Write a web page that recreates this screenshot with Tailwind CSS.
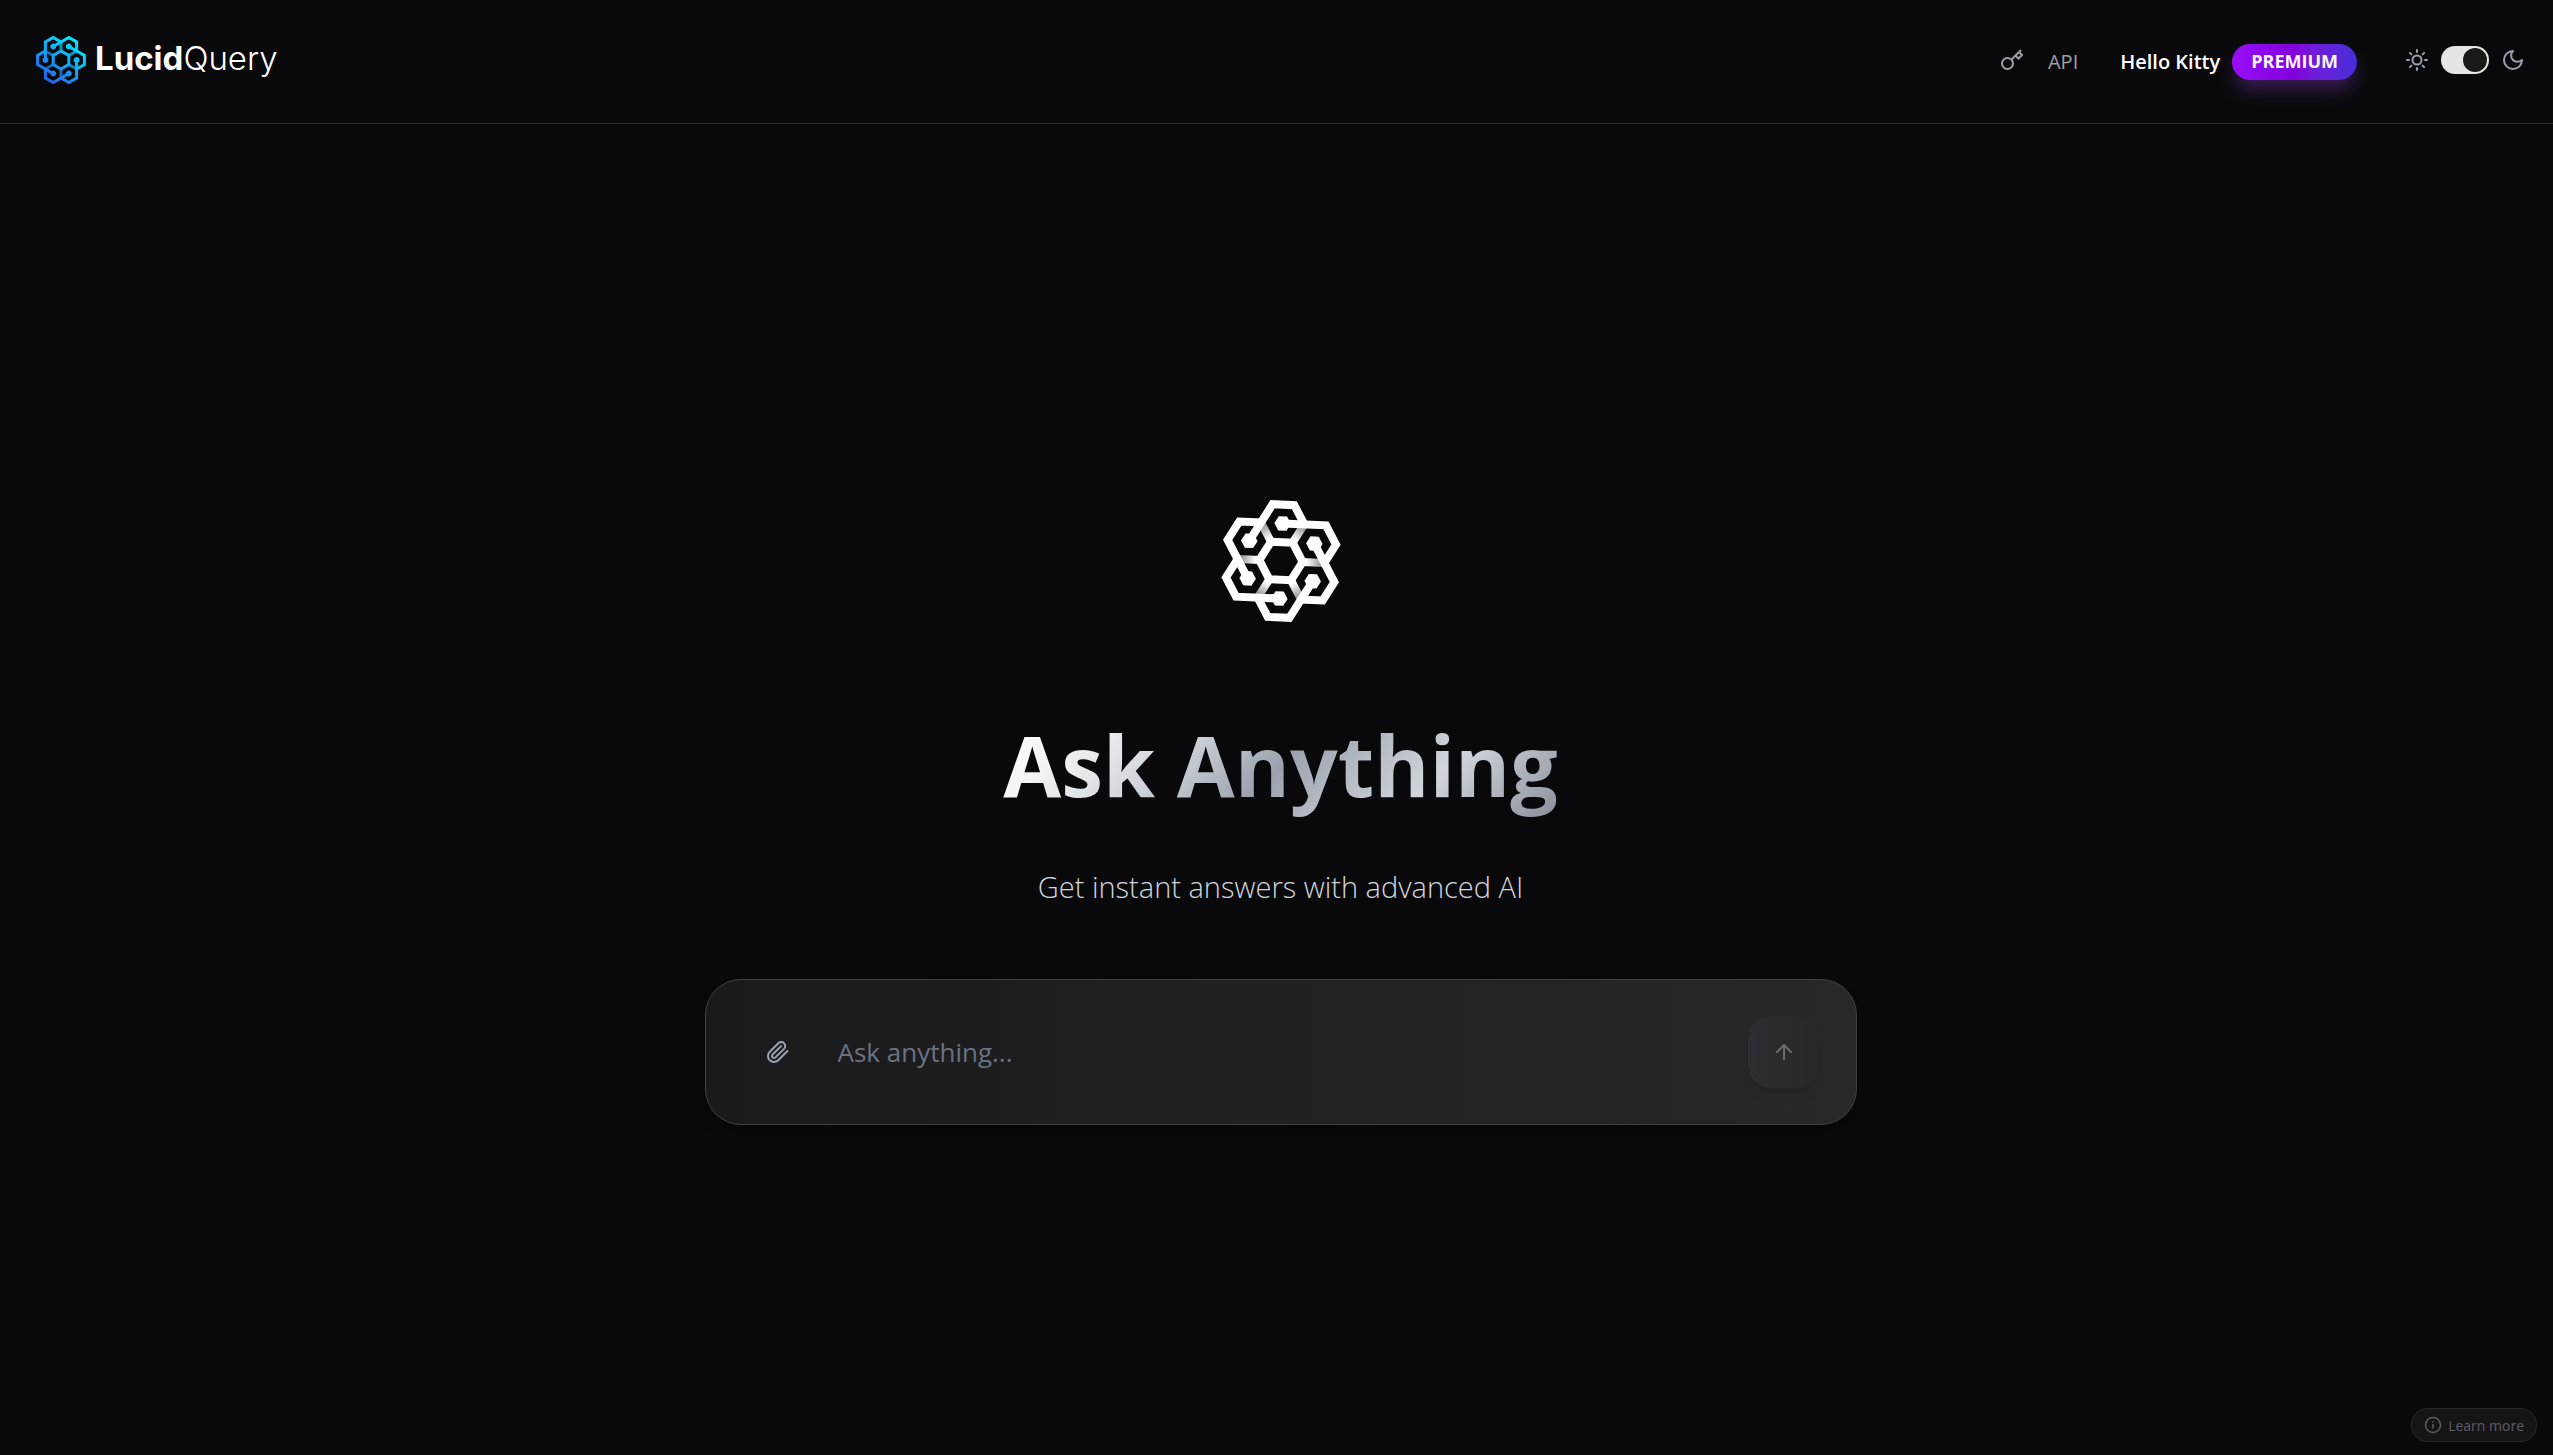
<!DOCTYPE html>
<html lang="en">
<head>
  <meta charset="UTF-8" />
  <meta name="viewport" content="width=device-width, initial-scale=1.0" />
  <title>LucidQuery</title>
  <script src="https://cdn.jsdelivr.net/npm/@tailwindcss/browser@4"></script>
</head>
<body class="bg-zinc-950 min-h-screen flex flex-col text-white font-['Open_Sans','Noto_Sans',sans-serif]">
  <!-- Header -->
  <header class="h-31 px-7 flex items-center justify-between border-b border-[#2b2b2d]">
    <a href="#" class="flex items-center gap-2 pl-[7px] -mt-1" aria-label="LucidQuery home">
      <svg class="w-[52px] h-[52px]" viewBox="-26 -26 52 52" fill="none" aria-hidden="true">
        <defs>
          <linearGradient id="brand" gradientUnits="userSpaceOnUse" x1="14" y1="-20" x2="-14" y2="20">
            <stop offset="0" stop-color="#00e8ff" />
            <stop offset="1" stop-color="#2563eb" />
          </linearGradient>
          <mask id="mark" maskUnits="userSpaceOnUse" x="-26" y="-26" width="52" height="52">
            <g transform="rotate(-30) scale(.09)">
              <g stroke="#fff" stroke-width="34">
                <g id="arm">
                  <path stroke="#bbb" d="M50-86.6 100-173.2" />
                  <path d="M0-173.2H200L250-86.6 196 6.9" />
                  <path stroke="none" fill="#fff" d="M36-173.2 18-142H-18L-36-173.2-18-204.4H18Z" />
                </g>
                <use href="#arm" transform="rotate(60)" />
                <use href="#arm" transform="rotate(120)" />
                <use href="#arm" transform="rotate(180)" />
                <use href="#arm" transform="rotate(240)" />
                <use href="#arm" transform="rotate(300)" />
                <path d="M100 0 50 86.6H-50L-100 0-50-86.6H50Z" />
              </g>
            </g>
          </mask>
        </defs>
        <rect x="-26" y="-26" width="52" height="52" fill="url(#brand)" mask="url(#mark)" />
      </svg>
      <span class="text-[33px] leading-10 pb-1 font-['Inter',sans-serif]"><span class="font-bold">Lucid</span><span class="font-light">Query</span></span>
    </a>

    <nav class="flex items-center">
      <a href="#" class="flex items-center gap-6 text-[20px] font-medium text-zinc-400">
        <svg class="w-6 h-6 -mt-1" viewBox="0 0 24 24" fill="none" stroke="currentColor" stroke-width="2" aria-hidden="true">
          <circle cx="7.5" cy="15.5" r="5.5" />
          <path d="m21 2-9.600 9.600M15.500 7.500l3 3L22 7l-3-3" />
        </svg>
        API
      </a>
      <span class="ml-[42px] text-[20px] font-semibold">Hello Kitty</span>
      <span class="ml-3 h-9 px-[19px] flex items-center rounded-full bg-linear-to-r from-[#9810fa] via-[#8200db] to-[#432dd7] text-[18px] font-bold text-purple-50 shadow-[0_12px_18px_-3px] shadow-purple-500/30">PREMIUM</span>
      <label class="ml-12 -mt-1 flex items-center gap-3 text-gray-400 cursor-pointer">
        <svg class="w-6 h-6" viewBox="0 0 24 24" fill="none" stroke="currentColor" stroke-width="2" stroke-linecap="round" aria-hidden="true">
          <circle cx="12" cy="12" r="4.500" />
          <path d="M12 2v2M12 20v2M2 12h2M20 12h2M4.900 4.900l1.500 1.500M17.600 17.600l1.500 1.500M4.900 19.100l1.500-1.500M17.600 6.400l1.500-1.500" />
        </svg>
        <input type="checkbox" role="switch" checked aria-label="Dark mode" class="peer sr-only" />
        <span class="w-12 h-7 p-0.5 rounded-full bg-stone-200 flex justify-start peer-checked:justify-end">
          <span class="w-6 h-6 rounded-full bg-stone-900"></span>
        </span>
        <svg class="w-6 h-6" viewBox="0 0 24 24" fill="none" stroke="currentColor" stroke-width="2" stroke-linejoin="round" aria-hidden="true">
          <path d="M12 3a6 6 0 0 0 9 9 9 9 0 1 1-9-9Z" />
        </svg>
      </label>
    </nav>
  </header>

  <!-- Hero and question box -->
  <main class="flex-1 pl-2 pt-[375px] flex flex-col items-center">
    <svg class="w-[124px] h-[124px]" viewBox="-62 -62 124 124" fill="none" role="img" aria-label="LucidQuery">
      <defs>
        <linearGradient id="fold" gradientUnits="userSpaceOnUse" x1="58" y1="-100" x2="92" y2="-160">
          <stop offset="0" stop-color="#fff" />
          <stop offset="1" stop-color="#999" />
        </linearGradient>
      </defs>
      <g transform="rotate(2.500) scale(.217)" stroke="#fff" stroke-width="37">
        <g id="limb">
          <path stroke="url(#fold)" d="M50-86.6 100-173.2" />
          <path d="M0-173.2H200L250-86.6 196 6.9" />
          <path stroke="none" fill="#fff" d="M38-173.2 19-140.300H-19L-38-173.2-19-206.100H19Z" />
        </g>
        <use href="#limb" transform="rotate(60)" />
        <use href="#limb" transform="rotate(120)" />
        <use href="#limb" transform="rotate(180)" />
        <use href="#limb" transform="rotate(240)" />
        <use href="#limb" transform="rotate(300)" />
        <path d="M100 0 50 86.6H-50L-100 0-50-86.6H50Z" />
      </g>
    </svg>

    <h1 class="mt-[82px] text-[84px] leading-[120px] font-bold text-transparent bg-clip-text bg-[linear-gradient(135deg,#ffffff_0%,#f3f4f6_15%,#d1d5db_32%,#9ca3af_50%,#d1d5db_75%,#868c98_100%)]">Ask Anything</h1>
    <p class="mt-[42px] text-[29px] leading-10 font-light text-gray-300">Get instant answers with advanced AI</p>

    <form class="mt-18 w-full max-w-6xl h-[146px] pl-14 pr-9 flex items-center rounded-[36px] border border-zinc-700 bg-linear-to-r from-[#1a1a1c] to-[#28282a] shadow-lg shadow-black/20">
      <button type="button" aria-label="Attach file" class="w-8 h-8 flex items-center justify-center text-gray-400">
        <svg class="w-6 h-6" viewBox="0 0 24 24" fill="none" stroke="currentColor" stroke-width="2" stroke-linecap="round" stroke-linejoin="round" aria-hidden="true">
          <path d="m21.440 11.050-9.190 9.190a6 6 0 0 1-8.490-8.490l8.570-8.570A4 4 0 1 1 18 8.840l-8.590 8.570a2 2 0 0 1-2.830-2.830l8.490-8.480" />
        </svg>
      </button>
      <input type="text" aria-label="Question" placeholder="Ask anything..." class="ml-11 flex-1 h-18 bg-transparent text-[26px] placeholder:text-gray-500 outline-none" />
      <button type="submit" aria-label="Send" class="w-18 h-18 flex items-center justify-center rounded-3xl bg-linear-to-r from-[#2e2d33] to-[#272729] text-[#6b6b6d] shadow-lg shadow-black/5">
        <svg class="w-6 h-6" viewBox="0 0 24 24" fill="none" stroke="currentColor" stroke-width="2" stroke-linecap="round" stroke-linejoin="round" aria-hidden="true">
          <path d="m5 12 7-7 7 7M12 19V5" />
        </svg>
      </button>
    </form>
  </main>

  <!-- Footer -->
  <footer class="px-4 pb-[13px] flex justify-end">
    <button type="button" class="h-[34px] px-3 flex items-center gap-1.5 rounded-2xl border border-zinc-800 bg-[#151517] text-[14px] text-[#5d5d66]">
      <svg class="w-[18px] h-[18px]" viewBox="0 0 18 18" fill="none" stroke="currentColor" stroke-width="1.500" aria-hidden="true">
        <circle cx="9" cy="9" r="7.500" />
        <path d="M9 8v4.500M9 5v1.500" />
      </svg>
      Learn more
    </button>
  </footer>
</body>
</html>
